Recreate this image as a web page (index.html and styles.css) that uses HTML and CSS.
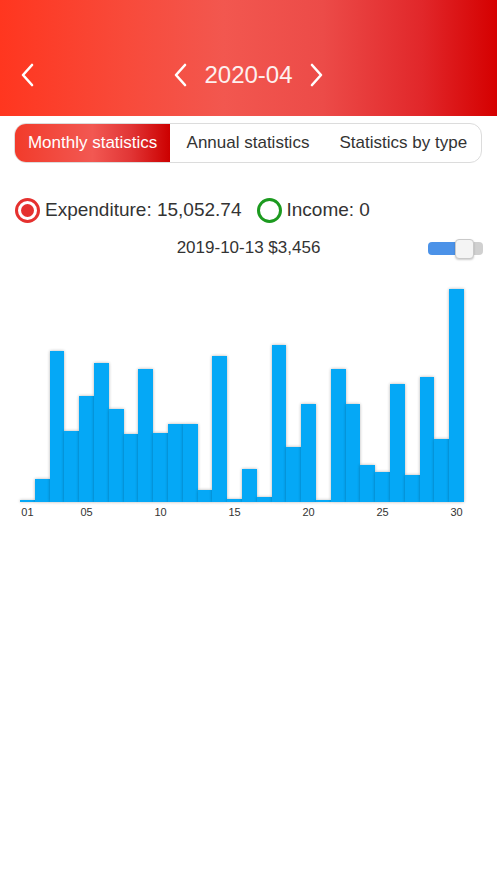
FILE: index.html
```html
<!DOCTYPE html>
<html lang="en">
<head>
    <meta charset="UTF-8">
    <meta name="viewport" content="width=device-width, initial-scale=1.0">
    <title>Statistics</title>
    <link rel="stylesheet" href="styles.css">
</head>
<body>
    <div class="topbar">
        <div class="topbar-row">
            <a class="back" href="#">
                <svg width="14" height="24" viewBox="0 0 14 24"><polyline points="12,2 3,12 12,22" /></svg>
            </a>
            <div class="month-nav">
                <svg width="14" height="24" viewBox="0 0 14 24"><polyline points="12,2 3,12 12,22" /></svg>
                <span class="month">2020-04</span>
                <svg width="14" height="24" viewBox="0 0 14 24"><polyline points="2,2 11,12 2,22" /></svg>
            </div>
            <div></div>
        </div>
    </div>

    <div class="tabs">
        <div class="tab active">Monthly statistics</div>
        <div class="tab">Annual statistics</div>
        <div class="tab">Statistics by type</div>
    </div>

    <div class="legend">
        <span class="radio checked"></span>
        <span class="legend-text">Expenditure: 15,052.74</span>
        <span class="radio income"></span>
        <span class="legend-text">Income: 0</span>
    </div>

    <div class="detail-row">
        <div></div>
        <div class="detail">2019-10-13 $3,456</div>
        <div class="toggle">
            <span class="knob"></span>
        </div>
    </div>

    <div class="chart">
        <div class="day"><div class="bar" style="height: 2px"></div><span class="tick">01</span></div>
        <div class="day"><div class="bar" style="height: 23px"></div><span class="tick"></span></div>
        <div class="day"><div class="bar" style="height: 151px"></div><span class="tick"></span></div>
        <div class="day"><div class="bar" style="height: 71px"></div><span class="tick"></span></div>
        <div class="day"><div class="bar" style="height: 106px"></div><span class="tick">05</span></div>
        <div class="day"><div class="bar" style="height: 139px"></div><span class="tick"></span></div>
        <div class="day"><div class="bar" style="height: 93px"></div><span class="tick"></span></div>
        <div class="day"><div class="bar" style="height: 68px"></div><span class="tick"></span></div>
        <div class="day"><div class="bar" style="height: 133px"></div><span class="tick"></span></div>
        <div class="day"><div class="bar" style="height: 69px"></div><span class="tick">10</span></div>
        <div class="day"><div class="bar" style="height: 78px"></div><span class="tick"></span></div>
        <div class="day"><div class="bar" style="height: 78px"></div><span class="tick"></span></div>
        <div class="day"><div class="bar" style="height: 12px"></div><span class="tick"></span></div>
        <div class="day"><div class="bar" style="height: 146px"></div><span class="tick"></span></div>
        <div class="day"><div class="bar" style="height: 3px"></div><span class="tick">15</span></div>
        <div class="day"><div class="bar" style="height: 33px"></div><span class="tick"></span></div>
        <div class="day"><div class="bar" style="height: 5px"></div><span class="tick"></span></div>
        <div class="day"><div class="bar" style="height: 157px"></div><span class="tick"></span></div>
        <div class="day"><div class="bar" style="height: 55px"></div><span class="tick"></span></div>
        <div class="day"><div class="bar" style="height: 98px"></div><span class="tick">20</span></div>
        <div class="day"><div class="bar" style="height: 2px"></div><span class="tick"></span></div>
        <div class="day"><div class="bar" style="height: 133px"></div><span class="tick"></span></div>
        <div class="day"><div class="bar" style="height: 98px"></div><span class="tick"></span></div>
        <div class="day"><div class="bar" style="height: 37px"></div><span class="tick"></span></div>
        <div class="day"><div class="bar" style="height: 30px"></div><span class="tick">25</span></div>
        <div class="day"><div class="bar" style="height: 118px"></div><span class="tick"></span></div>
        <div class="day"><div class="bar" style="height: 27px"></div><span class="tick"></span></div>
        <div class="day"><div class="bar" style="height: 125px"></div><span class="tick"></span></div>
        <div class="day"><div class="bar" style="height: 63px"></div><span class="tick"></span></div>
        <div class="day"><div class="bar" style="height: 213px"></div><span class="tick">30</span></div>
    </div>
</body>
</html>
```

FILE: styles.css
```css
* {
    margin: 0;
    padding: 0;
    box-sizing: border-box;
}

body {
    font-family: 'Liberation Sans', Arial, sans-serif;
    color: #333;
    background-color: #fff;
}

/* red header */
.topbar {
    height: 116px;
    padding-bottom: 20px;
    display: flex;
    align-items: flex-end;
    background: linear-gradient(90deg, #ff361f 0%, #f84a3a 25%, #f2574f 45%, #ec4b48 65%, #e1272a 85%, #d50000 100%);
    color: #fff;
}

.topbar-row {
    width: 100%;
    height: 42px;
    display: grid;
    grid-template-columns: 1fr auto 1fr;
    align-items: center;
}

.topbar svg polyline {
    fill: none;
    stroke: #fff;
    stroke-width: 2.6;
    stroke-linecap: round;
    stroke-linejoin: round;
}

.back {
    display: flex;
    padding-left: 20px;
}

.month-nav {
    display: flex;
    align-items: center;
    gap: 17px;
}

.month {
    font-size: 24px;
    color: #fdf0ef;
}

/* segmented control */
.tabs {
    display: flex;
    height: 40px;
    margin: 7px 15px 0 14px;
    border: 1px solid #dcdcdc;
    border-radius: 12px;
    overflow: hidden;
}

.tab {
    flex: 1;
    display: flex;
    align-items: center;
    justify-content: center;
    font-size: 17px;
    color: #333;
    white-space: nowrap;
}

.tab.active {
    background: linear-gradient(90deg, #f23b2b 0%, #f25852 50%, #e13535 75%, #cc0000 100%);
    color: #fff;
}

/* legend */
.legend {
    display: flex;
    align-items: center;
    height: 26px;
    margin-top: 34px;
    padding-left: 15px;
}

.radio {
    width: 25px;
    height: 25px;
    border-radius: 50%;
    border: 3px solid #e5312f;
    padding: 3px;
    flex-shrink: 0;
}

.radio.checked {
    background: #e5312f;
    background-clip: content-box;
}

.radio.income {
    border-color: #1c9a1f;
    margin-left: 15px;
}

.legend-text {
    margin-left: 5px;
    font-size: 19px;
    color: #333;
}

/* selected point + toggle */
.detail-row {
    display: grid;
    grid-template-columns: 1fr auto 1fr;
    align-items: center;
    height: 24px;
    margin-top: 13px;
}

.detail {
    font-size: 17px;
    color: #333;
}

.toggle {
    justify-self: end;
    position: relative;
    width: 55px;
    height: 13px;
    margin-right: 14px;
    border-radius: 4px;
    background: linear-gradient(90deg, #4b92e8 0%, #4b92e8 62%, #d0d0d0 62%, #d0d0d0 100%);
}

.knob {
    position: absolute;
    left: 27px;
    top: -3px;
    width: 19px;
    height: 20px;
    border-radius: 4px;
    background: #f4f4f4;
    border: 1px solid #c9c9c9;
    box-shadow: 0 1px 2px rgba(0, 0, 0, 0.2);
}

/* bar chart */
.chart {
    display: flex;
    align-items: flex-end;
    width: 444px;
    margin: 29px 0 0 20px;
}

.day {
    flex: 1;
    display: flex;
    flex-direction: column;
    align-items: stretch;
}

.bar {
    background-color: #05a8f6;
    box-shadow: 0 0 3px rgba(0, 0, 0, 0.3);
}

.tick {
    height: 14px;
    margin-top: 3px;
    font-size: 11px;
    line-height: 14px;
    text-align: center;
    white-space: nowrap;
    color: #333;
}
```
